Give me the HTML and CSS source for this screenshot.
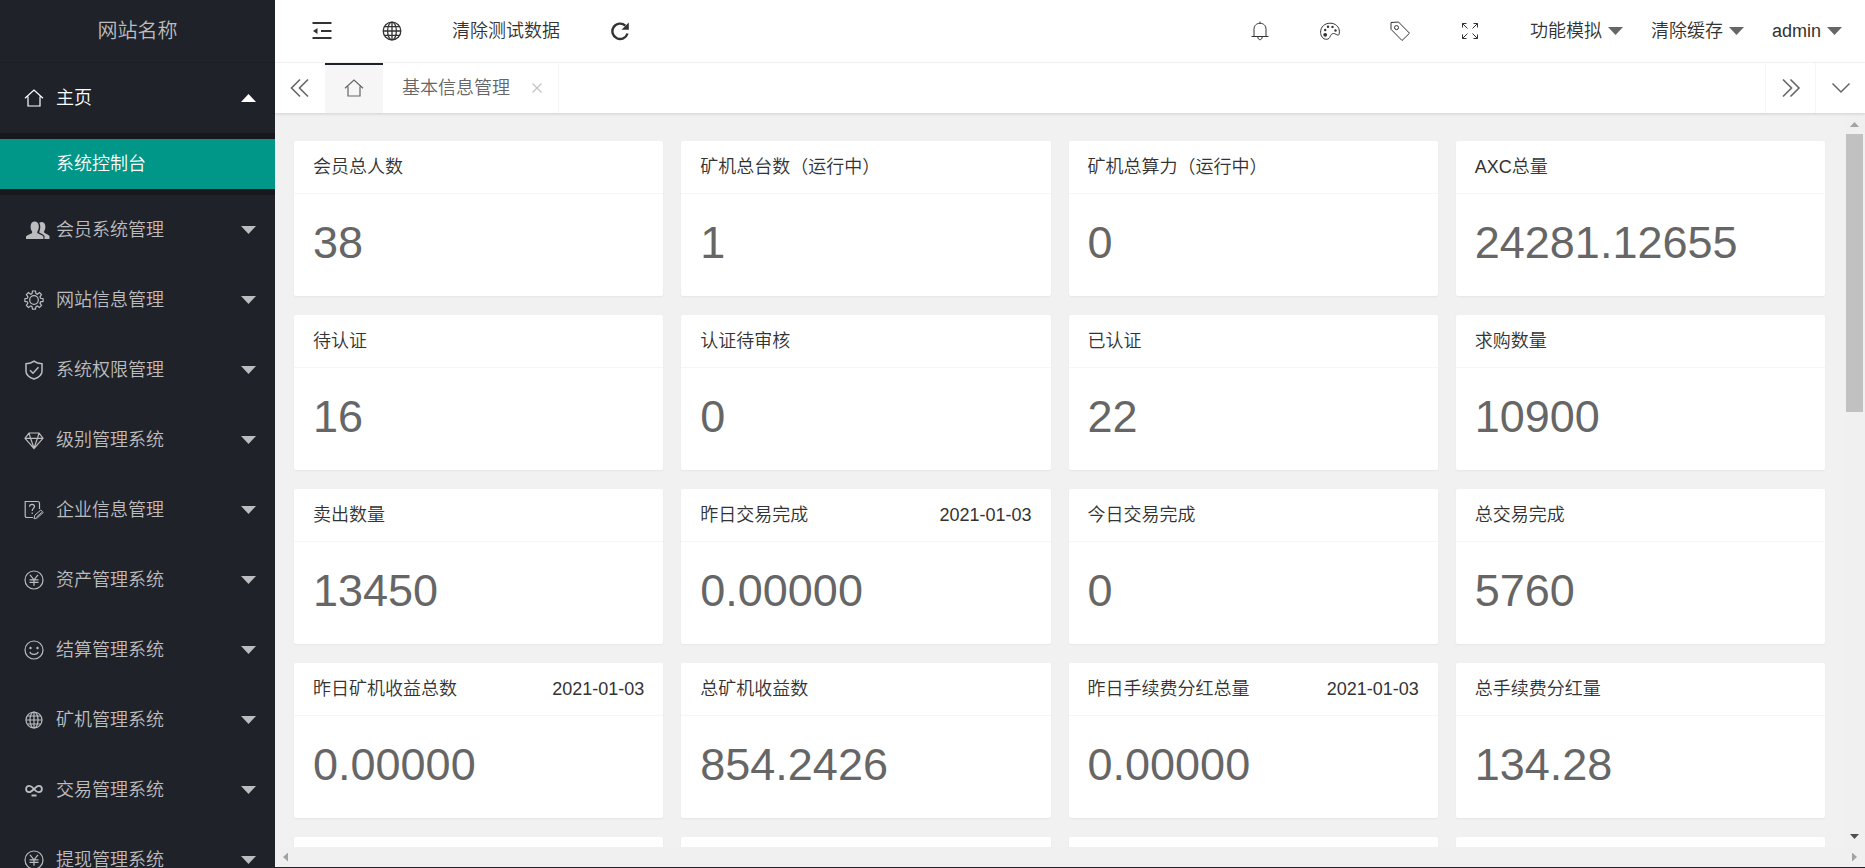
FILE: index.html
```html
<!DOCTYPE html>
<html lang="zh-CN">
<head>
<meta charset="utf-8">
<title>网站名称</title>
<link rel="stylesheet" href="styles.css">
</head>
<body>
<svg class="sprite" aria-hidden="true">
  <symbol id="home" viewBox="0 0 20 20"><path d="M1 10.2 10 2l9 8.200M4 8.500V18h12V8.500"/></symbol>
  <symbol id="users" viewBox="0 0 24 18"><g fill="currentColor" stroke="none"><path d="M0 18v-2.500c1-1.500 4-2 5.800-3.200.6-.6.400-1.600 0-2.300C4.600 8.300 4.500 6.500 4.700 4.500 4.900 2 6.600.5 8.700.5s3.800 1.500 4 4c.2 2 .1 3.800-1.100 5.500-.4.700-.6 1.700 0 2.300 1.800 1.200 4.800 1.700 5.800 3.200V18z"/><path d="M13.300 1.800c.7-.6 1.500-.8 2.300-.8 2 0 3.500 1.400 3.700 3.800.1 1.900 0 3.600-1 5-.4.700-.4 1.500 0 2 1.500 1 4.200 1.600 5.200 3.200V18h-5v-2.900c-.9-1.700-3.700-2.500-5.300-3.500-.2-.4 0-.8.200-1.200 1.200-2.600 1.300-6.400-.1-8.600z"/></g></symbol>
  <symbol id="gear" viewBox="0 0 20 20"><circle cx="10" cy="10" r="4.300"/><path d="M8.500 1h3l.5 2.600 1.300.6L15.500 2.600l2 2-1.500 2.300.6 1.400 2.500.4v2.700l-2.500.5-.6 1.300 1.500 2.300-2 2-2.200-1.500-1.300.6-.5 2.500h-3L8 16.600 6.700 16l-2.300 1.500-2-2 1.500-2.300-.5-1.300L.9 11.400V8.700l2.500-.4.5-1.400-1.500-2.300 2-2 2.300 1.600L8 3.600z"/></symbol>
  <symbol id="shield" viewBox="0 0 20 20"><path stroke-width="1.500" d="M10 1.200C12 2.800 15 3.600 18 3.700v7.500c0 3.700-4 6.500-8 7.800-4-1.300-8-4.100-8-7.800V3.700c3-.1 6-.9 8-2.500zM6 10.200l3 3 5.500-6"/></symbol>
  <symbol id="diamond" viewBox="0 0 20 20"><path d="M5 3h10l4 5.300L10 18.500 1 8.300zM1.300 8.300h17.400M5 3l1.500 5.300L10 18l3.500-9.700L15 3"/></symbol>
  <symbol id="note" viewBox="0 0 20 20"><path d="M9 17.500H3c-1.300 0-1.800-.7-1.800-1.800V1.500h12.300c1.300 0 2 .7 2 2V9M5.500 6.800C5.600 4.900 6.900 4.300 8 4.300c1.500 0 2.500.9 2.500 2.300 0 1.700-2.300 2-2.300 4.300M8.200 12.400v1.500"/><path stroke-width="1" d="M10 18.800l.8-3.600 6-5.200 2.400 2.600-5.900 5.300zM12.400 17.200l5.400-4.900"/></symbol>
  <symbol id="yen" viewBox="0 0 20 20"><circle cx="10" cy="10" r="9"/><path d="m6 4.800 4 5 4-5M10 9.800v6M5.500 9.800h9M5.500 12.400h9"/></symbol>
  <symbol id="smile" viewBox="0 0 20 20"><circle cx="10" cy="10" r="9"/><path d="M5.800 11.800c.9 3.400 7.500 3.400 8.400 0"/><g fill="currentColor" stroke="none"><circle cx="6.500" cy="8" r="1.200"/><circle cx="13.500" cy="8" r="1.200"/></g></symbol>
  <symbol id="globe" viewBox="0 0 20 20"><circle cx="10" cy="10" r="8"/><ellipse cx="10" cy="10" rx="4" ry="8"/><path d="M10 2v16M2 10h16M3.300 6h13.400M3.300 14h13.400"/></symbol>
  <symbol id="loop" viewBox="0 0 20 20"><path stroke-width="1.800" d="M10 9C8.500 7 7 5.800 5.300 5.800A3.200 3.200 0 0 0 5.300 12.200C8.500 12.200 11.500 5.800 14.700 5.800a3.200 3.200 0 0 1 0 6.400C13 12.200 11.500 11 10 9zM7.500 15.500h5"/></symbol>
  <symbol id="shrink" viewBox="0 0 20 20"><path stroke-width="2" d="M.5 2h19M9 10h10.500M.5 17h19"/><path fill="currentColor" stroke="none" d="M1 10l4.500-3v6z"/></symbol>
  <symbol id="refresh" viewBox="0 0 20 20"><path stroke-width="2.400" d="M17.500 12.500A7.700 7.700 0 1 1 15.300 4.600"/><path fill="currentColor" stroke="none" d="M18.800 1.500v7.300h-7.300z"/></symbol>
  <symbol id="bell" viewBox="0 0 20 20"><path d="M1.500 15.500h17M4 15.500V8.300C4 4.500 6.500 2.300 10 2.300s6 2.200 6 6v7.200M10 .6v1.700M7.800 16c.2 3.600 4.200 3.600 4.400 0"/></symbol>
  <symbol id="palette" viewBox="0 0 20 20"><path d="M6.500 18.300C2.800 18.300.6 15 .6 11.200.6 5.700 4.800 2.200 10.200 2.200c5.200 0 9.200 3.600 9.200 8.600 0 2.600-.5 3.500-1.500 3.300-1.600-.3-2.500-1.600-4.300-1.600-4 0-2.600 5.800-7.100 5.800z"/><g fill="currentColor" stroke="none"><circle cx="8" cy="5.800" r="1.200"/><circle cx="12.500" cy="5.900" r="1.200"/><circle cx="5.200" cy="9" r="1.200"/><circle cx="15.500" cy="9.500" r="1.200"/><circle cx="5.200" cy="13.800" r="1.900"/></g></symbol>
  <symbol id="tag" viewBox="0 0 20 20"><path d="M1 1.500 8.500 1 19.500 12.200 12 19.500 1 8.300z"/><circle cx="6.500" cy="6.600" r="2"/></symbol>
  <symbol id="full" viewBox="0 0 20 20"><path stroke-width="1" d="M2.500 6.500v-4h4M2.500 2.500l5 5M13.500 2.500h4v4M17.500 2.500l-5 5M2.500 13.500v4h4M2.500 17.500l5-5M13.500 17.500h4v-4M17.500 17.500l-5-5"/></symbol>
  <symbol id="left2" viewBox="0 0 20 20"><path stroke-width="1.600" d="M10 1.500 1.500 10l8.500 8.500M18 1.500 9.500 10l8.500 8.500"/></symbol>
  <symbol id="right2" viewBox="0 0 20 20"><path stroke-width="1.600" d="M2 1.500 10.500 10 2 18.500M9.500 1.500 18 10l-8.500 8.500"/></symbol>
  <symbol id="down" viewBox="0 0 20 20"><path stroke-width="1.500" d="M1.500 5.500 10 14l8.500-8.500"/></symbol>
  <symbol id="close" viewBox="0 0 20 20"><path stroke-width="2.400" d="m1 1 18 18M19 1 1 19"/></symbol>
</svg>
<div class="app">
  <aside class="side">
    <div class="logo">网站名称</div>
    <nav class="menu">
      <a class="item open" href="#"><svg class="icon"><use href="#home"/></svg><span>主页</span><i class="caret up"></i></a>
      <div class="sub"><a class="current" href="#">系统控制台</a></div>
      <a class="item" href="#"><svg class="icon wide"><use href="#users"/></svg><span>会员系统管理</span><i class="caret"></i></a>
      <a class="item" href="#"><svg class="icon"><use href="#gear"/></svg><span>网站信息管理</span><i class="caret"></i></a>
      <a class="item" href="#"><svg class="icon"><use href="#shield"/></svg><span>系统权限管理</span><i class="caret"></i></a>
      <a class="item" href="#"><svg class="icon"><use href="#diamond"/></svg><span>级别管理系统</span><i class="caret"></i></a>
      <a class="item" href="#"><svg class="icon"><use href="#note"/></svg><span>企业信息管理</span><i class="caret"></i></a>
      <a class="item" href="#"><svg class="icon"><use href="#yen"/></svg><span>资产管理系统</span><i class="caret"></i></a>
      <a class="item" href="#"><svg class="icon"><use href="#smile"/></svg><span>结算管理系统</span><i class="caret"></i></a>
      <a class="item" href="#"><svg class="icon"><use href="#globe"/></svg><span>矿机管理系统</span><i class="caret"></i></a>
      <a class="item" href="#"><svg class="icon"><use href="#loop"/></svg><span>交易管理系统</span><i class="caret"></i></a>
      <a class="item" href="#"><svg class="icon"><use href="#yen"/></svg><span>提现管理系统</span><i class="caret"></i></a>
    </nav>
  </aside>
  <div class="main">
    <header class="header">
      <div class="tools">
        <a href="#" aria-label="侧边伸缩"><svg class="icon"><use href="#shrink"/></svg></a>
        <a href="#" aria-label="前台"><svg class="icon large"><use href="#globe"/></svg></a>
        <a href="#">清除测试数据</a>
        <a href="#" aria-label="刷新"><svg class="icon"><use href="#refresh"/></svg></a>
      </div>
      <div class="tools end">
        <a href="#" aria-label="消息"><svg class="icon"><use href="#bell"/></svg></a>
        <a href="#" aria-label="主题"><svg class="icon"><use href="#palette"/></svg></a>
        <a href="#" aria-label="便签"><svg class="icon"><use href="#tag"/></svg></a>
        <a href="#" aria-label="全屏"><svg class="icon"><use href="#full"/></svg></a>
        <div class="drops">
          <button type="button">功能模拟<i class="caret"></i></button>
          <button type="button">清除缓存<i class="caret"></i></button>
          <button type="button">admin<i class="caret"></i></button>
        </div>
      </div>
    </header>
    <div class="tabs">
      <button class="ctl" type="button" aria-label="向左"><svg class="icon"><use href="#left2"/></svg></button>
      <a class="tab home" href="#" aria-label="主页"><svg class="icon"><use href="#home"/></svg></a>
      <div class="tab page"><a href="#">基本信息管理</a><button type="button" aria-label="关闭"><svg class="small"><use href="#close"/></svg></button></div>
      <button class="ctl edge push" type="button" aria-label="向右"><svg class="icon"><use href="#right2"/></svg></button>
      <button class="ctl edge" type="button" aria-label="更多"><svg class="icon"><use href="#down"/></svg></button>
    </div>
    <div class="frame">
      <main class="cards">
        <section class="card"><h2>会员总人数</h2><p>38</p></section>
        <section class="card"><h2>矿机总台数（运行中）</h2><p>1</p></section>
        <section class="card"><h2>矿机总算力（运行中）</h2><p>0</p></section>
        <section class="card"><h2>AXC总量</h2><p>24281.12655</p></section>
        <section class="card"><h2>待认证</h2><p>16</p></section>
        <section class="card"><h2>认证待审核</h2><p>0</p></section>
        <section class="card"><h2>已认证</h2><p>22</p></section>
        <section class="card"><h2>求购数量</h2><p>10900</p></section>
        <section class="card"><h2>卖出数量</h2><p>13450</p></section>
        <section class="card"><h2>昨日交易完成<time>2021-01-03</time></h2><p>0.00000</p></section>
        <section class="card"><h2>今日交易完成</h2><p>0</p></section>
        <section class="card"><h2>总交易完成</h2><p>5760</p></section>
        <section class="card"><h2>昨日矿机收益总数<time>2021-01-03</time></h2><p>0.00000</p></section>
        <section class="card"><h2>总矿机收益数</h2><p>854.2426</p></section>
        <section class="card"><h2>昨日手续费分红总量<time>2021-01-03</time></h2><p>0.00000</p></section>
        <section class="card"><h2>总手续费分红量</h2><p>134.28</p></section>
        <section class="card"></section>
        <section class="card"></section>
        <section class="card"></section>
        <section class="card"></section>
      </main>
      <div class="vbar"><i class="arrow up"></i><div class="track"><div class="thumb"></div></div><i class="arrow down"></i></div>
      <div class="hbar"><i class="arrow left"></i><i class="arrow right"></i></div>
    </div>
  </div>
</div>
</body>
</html>
```
FILE: styles.css
```css
* { box-sizing: border-box; }

body {
  margin: 0;
  background: #20222a;
  color: #333;
  font: 350 18px/28px "Liberation Sans", "Noto Sans CJK SC", sans-serif;
}

a { color: inherit; text-decoration: none; }
button { padding: 0; border: 0; background: none; color: inherit; font: inherit; cursor: pointer; }
svg { fill: none; stroke: currentColor; stroke-width: 1.2; }

.sprite { display: none; }
.icon { display: block; width: 20px; height: 20px; flex: none; }
.icon.wide { width: 24px; height: 18px; margin: 0 -6px 0 2px; }
.icon.large { width: 22px; height: 22px; margin: 0 -1px; }
.small { display: block; width: 10px; height: 10px; }

.caret {
  width: 15px;
  height: 8px;
  background: currentColor;
  clip-path: polygon(0 0, 100% 0, 50% 100%);
}
.caret.up { clip-path: polygon(50% 0, 100% 100%, 0 100%); }

.app { display: flex; height: 100vh; overflow: hidden; }

/* Sidebar */
.side {
  flex: none;
  width: 275px;
  overflow: hidden;
  background: #20222a;
  color: #bcbdbf;
}
.logo {
  height: 63px;
  border-bottom: 1px solid #1c1e25;
  font-size: 20px;
  line-height: 62px;
  text-align: center;
}
.item { display: flex; align-items: center; gap: 12px; height: 70px; padding: 0 19px 0 24px; }
.item.open, .current { color: #fff; }
.item .caret { margin-left: auto; }
.sub { padding: 6px 0; background: #17181e; }
.current { display: block; padding-left: 56px; background: #009688; line-height: 50px; }

/* Header */
.main { display: flex; flex: 1; flex-direction: column; min-width: 0; padding-bottom: 1px; }
.header {
  display: flex;
  flex: none;
  justify-content: space-between;
  height: 63px;
  padding-left: 12px;
  border-bottom: 1px solid #f6f6f6;
  background: #fff;
}
.tools { display: flex; align-items: center; }
.tools > a { padding: 0 25px; }
.tools.end svg { stroke-width: 1; }
.drops { display: flex; gap: 28px; padding: 0 23px 0 25px; }
.drops button { display: flex; align-items: center; gap: 6px; }
.drops .caret { background: #666; }

/* Page tabs */
.tabs {
  z-index: 1;
  display: flex;
  flex: none;
  height: 50px;
  background: #fff;
  box-shadow: 0 1px 3px rgba(0, 0, 0, .14);
  color: #666;
}
.ctl { display: flex; align-items: center; justify-content: center; width: 50px; }
.edge { border-left: 1px solid #f6f6f6; }
.push { margin-left: auto; }
.tab { display: flex; align-items: center; }
.home {
  justify-content: center;
  width: 58px;
  background: #f6f6f6;
  box-shadow: inset 0 2px #20222a;
}
.page { gap: 22px; padding: 0 16px 0 19px; border-right: 1px solid #f6f6f6; }
.page button { color: #c2c2c2; }

/* Dashboard */
.frame {
  display: grid;
  flex: 1;
  grid-template: minmax(0, 1fr) 20px / minmax(0, 1fr) 20px;
  min-height: 0;
  background: #f1f1f1;
}
.cards {
  display: grid;
  grid-template-columns: repeat(4, 1fr);
  grid-auto-rows: min-content;
  gap: 19px 18px;
  padding: 28px 20px 0 19px;
  overflow: hidden;
}
.card {
  min-height: 155px;
  border-radius: 2px;
  background: #fff;
  box-shadow: 0 1px 2px rgba(0, 0, 0, .05);
}
.card h2 {
  display: flex;
  justify-content: space-between;
  margin: 0;
  padding: 0 19px;
  border-bottom: 1px solid #f6f6f6;
  font-size: 18px;
  font-weight: inherit;
  line-height: 52px;
}
.card p { margin: 0; padding: 24px 19px 28px; color: #666; font-size: 45px; line-height: 50px; }

/* Scroll bars */
.vbar { display: flex; flex-direction: column; align-items: center; padding: 9px 1px 3px 0; background: #f0f0f0; }
.track { flex: 1; width: 17px; padding: 7px 0 5px; }
.thumb { height: 40%; background: #c1c1c1; }
.hbar {
  display: flex;
  grid-column: 1 / -1;
  align-items: center;
  justify-content: space-between;
  padding: 0 8px;
  background: #f0f0f0;
}
.arrow { width: 9px; height: 5px; background: #a3a3a3; }
.arrow.up { clip-path: polygon(50% 0, 100% 100%, 0 100%); }
.arrow.down { margin-bottom: 5px; background: #505050; clip-path: polygon(0 0, 100% 0, 50% 100%); }
.arrow.left, .arrow.right { width: 5px; height: 9px; }
.arrow.left { clip-path: polygon(0 50%, 100% 0, 100% 100%); }
.arrow.right { clip-path: polygon(0 0, 100% 50%, 0 100%); }
```
